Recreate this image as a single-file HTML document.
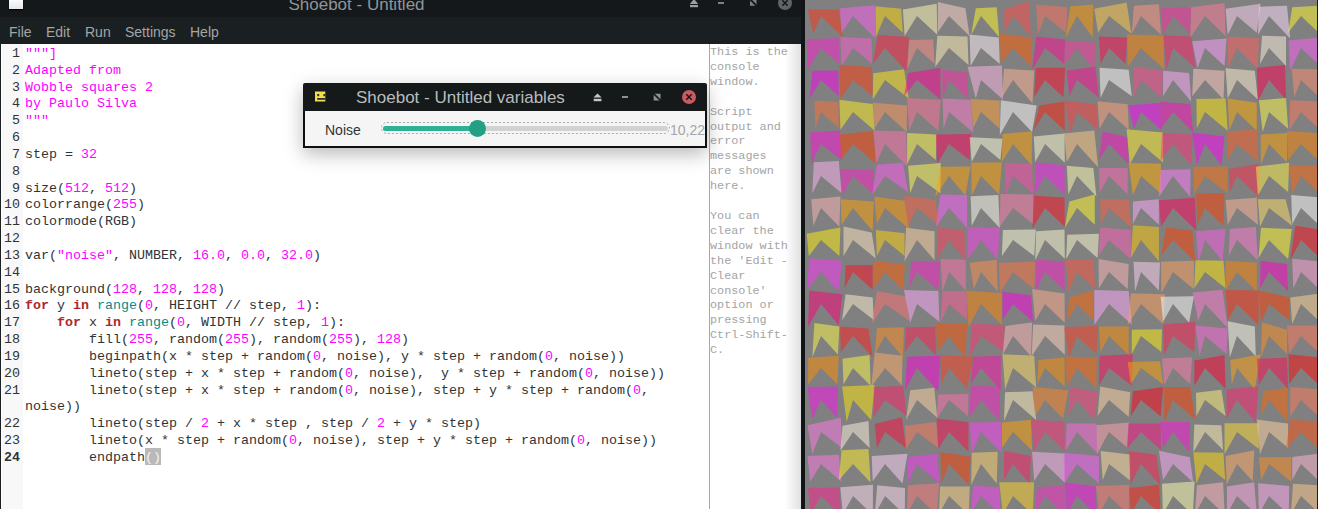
<!DOCTYPE html>
<html><head><meta charset="utf-8">
<style>
*{margin:0;padding:0;box-sizing:border-box}
html,body{width:1318px;height:509px;overflow:hidden;background:#1a1f21;position:relative}
body{font-family:"Liberation Sans",sans-serif}
.abs{position:absolute}
#titlebar{left:0;top:0;width:801px;height:17px;background:#14181a}
#title{left:0;width:713px;top:-5px;text-align:center;color:#8f9598;font-size:17px;white-space:nowrap}
#menubar{left:0;top:17px;width:801px;height:27px;background:#1a2021}
#menubar span{position:absolute;top:7px;color:#a2a5a7;font-size:14px}
#editor{left:1px;top:44px;width:708px;height:465px;background:#fff}
#gutter{left:2px;top:44px;width:21px;height:465px;background:#f8f8f8}
.code{font-family:"Liberation Mono",monospace;font-size:13.33px;line-height:16.83px;white-space:pre;color:#2e3436}
#lnums{left:1px;top:46px;width:22px;text-align:right}
#lnums div{padding-right:3px}
#code{left:25px;top:46px}
.m{color:#ff00ff}.k{color:#b0282c;font-weight:bold}.b{color:#008a8c}
.hl{background:#b9b9b9;color:#f4f4f4;padding:2px 0 0.5px}
#console{left:709px;top:44px;width:92px;height:465px;background:#fff;border-left:1px solid #a8a8a8}
#ctext{left:710px;top:45px;font-family:"Liberation Mono",monospace;font-size:11.8px;line-height:14.9px;color:#a4a4a4;white-space:pre}
#shadow{left:785px;top:44px;width:16px;height:465px;background:linear-gradient(to right,rgba(0,0,0,0),rgba(0,0,0,0.12))}
#strip{left:801px;top:0;width:4px;height:509px;background:#121517}
#canvas{left:805px;top:0;width:513px;height:509px;background:#808080;overflow:hidden}
#vw{left:303px;top:83px;width:404px;height:65px;box-shadow:0 6px 18px rgba(0,0,0,0.28)}
#vtitle{left:0;top:0;width:404px;height:28px;background:#15191a;border-radius:2px 2px 0 0}
#vcontent{left:0;top:28px;width:404px;height:37px;background:#f5f5f5;border:2px solid #0d0f10;border-top:none}
</style></head><body>
<div id="titlebar" class="abs">
  <div class="abs" style="left:9px;top:0;width:14px;height:9px;background:linear-gradient(#fbfafc,#e6e6e6);box-shadow:0 1px 1px #000"></div>
  <svg class="abs" style="left:690px;top:-1px" width="10" height="9" viewBox="0 0 10 9"><path d="M4 0 L8.2 5 L-0.2 5 Z" fill="#9a9ea0"/><rect x="0" y="6" width="8" height="2.2" fill="#9a9ea0"/></svg>
  <div class="abs" style="left:718px;top:2px;width:6px;height:2px;background:#7d8284"></div>
  <svg class="abs" style="left:750px;top:-1px" width="8" height="8" viewBox="0 0 8 8"><path d="M1 0.7 H6.5 V6.2 Z" fill="#7d8284"/><path d="M0 1.5 L5.3 6.8 H0 Z" fill="#7d8284"/><path d="M0.2 0.2 L6.8 6.8" stroke="#161a1c" stroke-width="1.6"/></svg>
  <svg class="abs" style="left:777px;top:-5px" width="16" height="16" viewBox="0 0 16 16"><circle cx="8" cy="8" r="7" fill="#5e6467"/><path d="M5.3 5.3 L10.7 10.7 M10.7 5.3 L5.3 10.7" stroke="#16181a" stroke-width="1.5"/></svg>
  <div id="title" class="abs">Shoebot - Untitled</div>
</div>
<div id="menubar" class="abs">
  <span style="left:9px">File</span>
  <span style="left:46px">Edit</span>
  <span style="left:85px">Run</span>
  <span style="left:125px">Settings</span>
  <span style="left:190px">Help</span>
</div>
<div id="editor" class="abs"></div>
<div id="gutter" class="abs"></div>
<div id="lnums" class="abs code"><div>1</div><div>2</div><div>3</div><div>4</div><div>5</div><div>6</div><div>7</div><div>8</div><div>9</div><div>10</div><div>11</div><div>12</div><div>13</div><div>14</div><div>15</div><div>16</div><div>17</div><div>18</div><div>19</div><div>20</div><div>21</div><div> </div><div>22</div><div>23</div><div style="font-weight:bold">24</div></div>
<div id="code" class="abs code"><span class="m">"""]
Adapted from
Wobble squares 2
by Paulo Silva
"""</span>

step = <span class="m">32</span>

size(<span class="m">512</span>, <span class="m">512</span>)
colorrange(<span class="m">255</span>)
colormode(RGB)

var(<span class="m">"noise"</span>, NUMBER, <span class="m">16.0</span>, <span class="m">0.0</span>, <span class="m">32.0</span>)

background(<span class="m">128</span>, <span class="m">128</span>, <span class="m">128</span>)
<span class="k">for</span> y <span class="k">in</span> <span class="b">range</span>(<span class="m">0</span>, HEIGHT // step, <span class="m">1</span>):
    <span class="k">for</span> x <span class="k">in</span> <span class="b">range</span>(<span class="m">0</span>, WIDTH // step, <span class="m">1</span>):
        fill(<span class="m">255</span>, random(<span class="m">255</span>), random(<span class="m">255</span>), <span class="m">128</span>)
        beginpath(x * step + random(<span class="m">0</span>, noise), y * step + random(<span class="m">0</span>, noise))
        lineto(step + x * step + random(<span class="m">0</span>, noise),  y * step + random(<span class="m">0</span>, noise))
        lineto(step + x * step + random(<span class="m">0</span>, noise), step + y * step + random(<span class="m">0</span>,
noise))
        lineto(step / <span class="m">2</span> + x * step , step / <span class="m">2</span> + y * step)
        lineto(x * step + random(<span class="m">0</span>, noise), step + y * step + random(<span class="m">0</span>, noise))
        endpath<span class="hl">()</span></div>
<div id="console" class="abs"></div>
<div id="ctext" class="abs">This is the
console
window.

Script
output and
error
messages
are shown
here.

You can
clear the
window with
the 'Edit -
Clear
console'
option or
pressing
Ctrl-Shift-
C.</div>
<div id="shadow" class="abs"></div>
<div id="strip" class="abs"></div>
<div id="canvas" class="abs"><svg width="513" height="509" viewBox="0 0 513 509" style="position:absolute;left:0;top:0"><g fill-opacity="0.5"><path d="M2.9 9.4 L33.8 9.4 L37.9 37.3 L16.0 16.0 L8.3 33.8Z" fill="#ff3416"/><path d="M35.0 8.3 L69.8 5.2 L70.4 38.6 L48.0 16.0 L36.5 32.8Z" fill="#ff60f2"/><path d="M70.4 6.2 L96.2 8.8 L97.9 32.8 L80.0 16.0 L70.8 36.9Z" fill="#ffda0a"/><path d="M97.9 9.4 L131.7 3.8 L132.3 34.8 L112.0 16.0 L99.6 35.9Z" fill="#fffcb6"/><path d="M132.9 2.1 L160.4 8.3 L164.6 35.9 L144.0 16.0 L132.9 32.0Z" fill="#ffd4ca"/><path d="M170.8 8.3 L191.7 7.3 L194.2 36.9 L176.0 16.0 L166.2 34.8Z" fill="#fffc2a"/><path d="M199.0 9.4 L224.0 1.0 L226.0 35.9 L208.0 16.0 L199.6 32.3Z" fill="#ff4848"/><path d="M231.2 4.6 L262.2 7.3 L261.2 32.8 L240.0 16.0 L232.9 34.8Z" fill="#ff705c"/><path d="M265.4 6.2 L288.3 4.6 L287.7 37.3 L272.0 16.0 L260.6 38.0Z" fill="#ff9800"/><path d="M289.3 8.8 L321.6 2.5 L326.4 33.8 L304.0 16.0 L293.1 32.8Z" fill="#ffca48"/><path d="M328.9 5.8 L353.9 4.2 L356.0 34.8 L336.0 16.0 L326.8 33.8Z" fill="#ff9884"/><path d="M355.6 7.9 L386.2 7.3 L385.2 33.8 L368.0 16.0 L358.1 34.8Z" fill="#ff2aa2"/><path d="M386.2 7.3 L419.5 3.1 L420.6 35.9 L400.0 16.0 L385.2 38.0Z" fill="#ff7a98"/><path d="M420.6 8.8 L455.6 3.8 L451.8 32.8 L432.0 16.0 L422.7 34.8Z" fill="#ffd4f2"/><path d="M453.9 6.7 L482.0 5.8 L485.2 38.6 L464.0 16.0 L452.9 34.8Z" fill="#ffdefc"/><path d="M487.2 7.3 L515.5 5.5 L515.8 34.7 L496.0 16.0 L483.1 32.8Z" fill="#fffc2a"/><path d="M1.7 39.6 L33.8 37.9 L34.4 64.0 L16.0 48.0 L2.5 70.2Z" fill="#ff20d4"/><path d="M35.4 37.1 L66.7 38.5 L67.1 64.0 L48.0 48.0 L36.5 66.1Z" fill="#ff5cd4"/><path d="M72.9 35.0 L104.2 37.1 L101.7 71.3 L80.0 48.0 L67.7 64.0Z" fill="#ff203e"/><path d="M104.2 40.0 L128.1 39.6 L129.6 64.0 L112.0 48.0 L102.1 69.2Z" fill="#ff8e84"/><path d="M132.3 35.8 L162.5 36.5 L163.5 65.0 L144.0 48.0 L130.2 67.1Z" fill="#fff2b6"/><path d="M164.6 34.4 L193.8 37.5 L194.8 64.0 L176.0 48.0 L165.6 66.1Z" fill="#fff2fc"/><path d="M194.8 33.8 L227.5 37.5 L226.0 66.5 L208.0 48.0 L195.8 64.0Z" fill="#ff5c00"/><path d="M231.2 36.5 L260.2 39.6 L259.1 64.0 L240.0 48.0 L227.1 70.2Z" fill="#ff0c98"/><path d="M260.6 41.2 L290.4 42.7 L289.3 70.2 L272.0 48.0 L259.1 65.0Z" fill="#ff34a2"/><path d="M293.9 36.5 L322.2 37.5 L320.6 64.0 L304.0 48.0 L295.6 64.0Z" fill="#ff0c52"/><path d="M322.2 34.4 L358.5 35.4 L359.1 69.2 L336.0 48.0 L322.7 67.1Z" fill="#ff8402"/><path d="M358.5 35.4 L386.2 36.5 L390.4 67.8 L368.0 48.0 L361.2 70.2Z" fill="#ff2066"/><path d="M387.2 41.2 L421.6 38.5 L419.5 66.1 L400.0 48.0 L392.5 68.2Z" fill="#ffa2ff"/><path d="M422.7 36.5 L453.9 37.9 L452.9 69.2 L432.0 48.0 L422.7 69.2Z" fill="#ff5c5c"/><path d="M457.0 35.8 L481.0 36.5 L481.0 66.1 L464.0 48.0 L455.0 64.0Z" fill="#fff2de"/><path d="M483.5 40.6 L515.5 37.5 L515.8 66.7 L496.0 48.0 L485.2 70.2Z" fill="#ff5cfc"/><path d="M7.3 70.8 L33.3 70.4 L33.8 96.3 L16.0 80.0 L4.6 98.4Z" fill="#ff00f2"/><path d="M34.4 65.0 L67.1 67.1 L67.7 96.0 L48.0 80.0 L35.4 99.4Z" fill="#ff3e0c"/><path d="M68.3 73.3 L99.0 69.2 L103.8 98.4 L80.0 80.0 L67.7 99.4Z" fill="#ffe816"/><path d="M103.1 72.9 L135.4 67.7 L135.4 99.4 L112.0 80.0 L99.0 96.3Z" fill="#ff0098"/><path d="M137.1 69.8 L162.5 72.5 L163.5 99.4 L144.0 80.0 L137.5 98.4Z" fill="#ff2aac"/><path d="M162.5 66.7 L196.9 65.6 L197.9 99.4 L176.0 80.0 L170.8 98.4Z" fill="#ffb6e8"/><path d="M199.0 68.8 L229.2 70.4 L227.5 103.6 L208.0 80.0 L196.9 97.3Z" fill="#ffb698"/><path d="M230.8 67.7 L260.2 67.7 L258.5 97.3 L240.0 80.0 L229.2 96.9Z" fill="#ff0c2a"/><path d="M261.8 70.4 L290.4 66.7 L293.9 97.8 L272.0 80.0 L264.3 96.3Z" fill="#ff0c98"/><path d="M294.5 67.7 L323.7 69.8 L326.8 96.3 L304.0 80.0 L295.6 97.8Z" fill="#ffffff"/><path d="M328.9 66.7 L357.7 70.8 L357.0 97.8 L336.0 80.0 L327.9 98.4Z" fill="#ff488e"/><path d="M358.1 70.8 L384.1 72.9 L386.2 101.5 L368.0 80.0 L358.1 96.3Z" fill="#ffacfc"/><path d="M388.3 68.8 L419.5 70.8 L418.5 99.4 L400.0 80.0 L387.2 96.3Z" fill="#ffcac0"/><path d="M420.6 68.3 L449.8 70.8 L452.9 99.4 L432.0 80.0 L422.7 98.4Z" fill="#fff2d4"/><path d="M451.8 67.7 L480.0 65.0 L481.0 99.4 L464.0 80.0 L452.9 101.1Z" fill="#ff0052"/><path d="M486.8 68.8 L515.5 69.5 L515.8 98.7 L496.0 80.0 L489.3 97.3Z" fill="#ff8e70"/><path d="M9.4 100.6 L33.3 101.8 L33.8 128.0 L16.0 112.0 L10.4 128.0Z" fill="#ff7034"/><path d="M34.4 99.8 L67.7 103.9 L69.8 130.8 L48.0 112.0 L35.4 129.8Z" fill="#fff220"/><path d="M67.7 102.7 L102.1 105.4 L101.7 131.9 L80.0 112.0 L69.8 128.0Z" fill="#ff985c"/><path d="M102.1 98.1 L135.8 99.8 L133.3 130.8 L112.0 112.0 L104.2 130.8Z" fill="#ff7098"/><path d="M137.5 98.5 L165.6 99.8 L168.3 132.5 L144.0 112.0 L138.5 128.8Z" fill="#ff7aca"/><path d="M165.6 99.1 L194.8 100.6 L194.8 128.8 L176.0 112.0 L168.3 128.0Z" fill="#ffa234"/><path d="M195.8 100.2 L231.7 105.4 L227.1 131.9 L208.0 112.0 L194.8 135.0Z" fill="#ffffff"/><path d="M234.4 105.4 L259.5 101.5 L259.8 130.7 L240.0 112.0 L228.1 130.8Z" fill="#ff200c"/><path d="M259.8 100.6 L291.4 104.3 L293.5 130.4 L272.0 112.0 L265.4 132.9Z" fill="#ff3e3e"/><path d="M292.5 101.2 L322.7 104.3 L323.7 129.8 L304.0 112.0 L294.5 128.8Z" fill="#ffa27a"/><path d="M323.1 105.4 L355.6 102.7 L356.0 129.8 L336.0 112.0 L328.9 128.8Z" fill="#ff00ff"/><path d="M355.6 101.8 L385.2 103.9 L388.3 132.5 L368.0 112.0 L356.0 128.8Z" fill="#ff0cc0"/><path d="M391.4 99.1 L420.6 98.5 L422.7 130.8 L400.0 112.0 L391.8 128.3Z" fill="#ffe80a"/><path d="M422.7 98.5 L451.8 102.7 L451.8 130.8 L432.0 112.0 L424.3 130.4Z" fill="#ffac00"/><path d="M453.9 100.2 L481.0 98.1 L483.1 128.8 L464.0 112.0 L457.7 131.9Z" fill="#fffc48"/><path d="M485.2 100.2 L515.5 101.5 L515.8 130.7 L496.0 112.0 L484.1 130.8Z" fill="#ff7a5c"/><path d="M5.2 132.5 L35.0 130.4 L36.5 160.0 L16.0 144.0 L6.2 164.2Z" fill="#ff10de"/><path d="M35.0 134.5 L67.7 131.0 L71.9 164.6 L48.0 144.0 L35.8 160.0Z" fill="#ff3e00"/><path d="M68.8 130.4 L101.0 131.4 L102.1 166.2 L80.0 144.0 L70.8 164.2Z" fill="#ff70ac"/><path d="M102.1 133.1 L131.7 134.5 L130.8 160.0 L112.0 144.0 L102.1 164.2Z" fill="#fffc48"/><path d="M130.8 134.5 L166.2 133.9 L164.6 160.0 L144.0 144.0 L132.3 163.8Z" fill="#ff005c"/><path d="M164.6 137.2 L197.5 138.7 L195.4 160.0 L176.0 144.0 L166.7 162.1Z" fill="#ffffde"/><path d="M197.5 133.9 L227.1 131.4 L226.7 165.2 L208.0 144.0 L196.9 162.1Z" fill="#ffa200"/><path d="M228.8 136.6 L259.5 133.5 L259.8 162.7 L240.0 144.0 L230.2 162.1Z" fill="#ffffd4"/><path d="M259.1 133.5 L289.3 130.4 L293.1 167.3 L272.0 144.0 L261.8 162.1Z" fill="#ffca84"/><path d="M297.7 131.4 L322.7 137.2 L323.7 164.2 L304.0 144.0 L293.9 160.0Z" fill="#ff10ca"/><path d="M321.6 129.3 L358.1 132.5 L358.1 162.5 L336.0 144.0 L324.8 164.2Z" fill="#fff22a"/><path d="M357.0 133.1 L387.7 134.5 L386.2 165.2 L368.0 144.0 L355.6 161.0Z" fill="#ff307a"/><path d="M387.2 132.5 L419.5 136.6 L416.4 165.2 L400.0 144.0 L391.8 165.2Z" fill="#ff00fc"/><path d="M421.6 131.4 L451.8 129.3 L453.5 162.1 L432.0 144.0 L422.7 160.0Z" fill="#ff5c20"/><path d="M455.6 134.5 L482.0 133.1 L482.0 162.5 L464.0 144.0 L456.0 164.2Z" fill="#ffa200"/><path d="M482.0 131.0 L515.5 133.5 L515.8 162.7 L496.0 144.0 L483.1 160.0Z" fill="#ff8400"/><path d="M8.8 162.2 L33.8 161.0 L36.5 192.9 L16.0 176.0 L7.3 193.3Z" fill="#ffb6f2"/><path d="M35.0 168.9 L68.8 170.0 L67.7 193.8 L48.0 176.0 L37.5 195.0Z" fill="#ff20ca"/><path d="M71.9 164.8 L97.9 162.7 L103.1 192.0 L80.0 176.0 L67.1 195.0Z" fill="#ff5cf2"/><path d="M103.1 165.8 L135.8 163.1 L135.4 193.3 L112.0 176.0 L105.2 193.3Z" fill="#fffc52"/><path d="M135.4 166.8 L165.6 166.4 L160.4 195.4 L144.0 176.0 L130.2 197.1Z" fill="#ffa200"/><path d="M166.2 162.7 L196.9 162.2 L194.2 194.4 L176.0 176.0 L166.7 195.4Z" fill="#ffa200"/><path d="M199.6 163.1 L227.1 163.7 L228.1 193.8 L208.0 176.0 L201.0 194.4Z" fill="#ff48ac"/><path d="M231.2 162.2 L259.5 165.5 L259.8 194.7 L240.0 176.0 L229.2 195.4Z" fill="#ff20f2"/><path d="M261.8 165.8 L288.3 167.9 L291.4 196.5 L272.0 176.0 L263.3 194.4Z" fill="#ffffb6"/><path d="M293.9 167.9 L322.7 167.9 L322.7 194.4 L304.0 176.0 L294.5 193.3Z" fill="#ff66b6"/><path d="M323.7 163.1 L356.0 163.7 L355.6 193.3 L336.0 176.0 L327.9 195.4Z" fill="#ffac00"/><path d="M355.6 170.0 L385.6 169.3 L385.2 197.1 L368.0 176.0 L353.9 197.1Z" fill="#ff7aff"/><path d="M388.3 166.8 L422.7 166.4 L422.7 193.3 L400.0 176.0 L389.3 193.8Z" fill="#ff700c"/><path d="M423.7 168.9 L453.5 163.7 L453.9 197.1 L432.0 176.0 L424.8 192.0Z" fill="#ff2a48"/><path d="M450.8 166.8 L484.1 162.7 L483.1 192.0 L464.0 176.0 L452.9 195.4Z" fill="#fff248"/><path d="M483.5 165.8 L515.5 165.5 L515.8 194.7 L496.0 176.0 L487.7 193.3Z" fill="#ff660c"/><path d="M6.2 199.3 L35.4 196.6 L34.4 226.8 L16.0 208.0 L8.3 225.8Z" fill="#ffb6b6"/><path d="M35.8 199.3 L68.8 201.4 L67.7 231.0 L48.0 208.0 L36.5 224.8Z" fill="#ffa200"/><path d="M69.2 196.6 L99.6 200.8 L104.2 228.9 L80.0 208.0 L71.9 224.0Z" fill="#ff9800"/><path d="M99.0 195.8 L130.2 199.9 L134.4 225.8 L112.0 208.0 L102.5 227.2Z" fill="#ff5c3e"/><path d="M135.4 194.5 L162.1 195.1 L162.1 227.9 L144.0 208.0 L130.8 226.8Z" fill="#ff5cff"/><path d="M165.6 196.2 L193.3 195.1 L194.8 227.9 L176.0 208.0 L166.7 225.8Z" fill="#fffff2"/><path d="M195.4 194.1 L228.1 194.5 L228.1 224.0 L208.0 208.0 L194.8 226.8Z" fill="#ff7aac"/><path d="M229.2 195.8 L259.5 197.5 L259.8 226.7 L240.0 208.0 L227.5 228.5Z" fill="#ff0c20"/><path d="M264.3 201.4 L289.8 194.5 L289.8 224.8 L272.0 208.0 L259.8 227.9Z" fill="#fffc2a"/><path d="M295.2 199.3 L323.7 199.3 L326.4 227.9 L304.0 208.0 L296.0 224.8Z" fill="#ff5c3e"/><path d="M327.9 201.4 L353.9 199.3 L353.9 224.8 L336.0 208.0 L327.9 224.0Z" fill="#ffacfc"/><path d="M353.9 200.3 L389.8 197.8 L391.4 230.6 L368.0 208.0 L356.0 226.8Z" fill="#ff005c"/><path d="M391.0 193.7 L419.5 193.0 L418.5 225.8 L400.0 208.0 L392.5 224.8Z" fill="#ff3e00"/><path d="M420.6 199.9 L451.8 197.8 L452.9 224.8 L432.0 208.0 L422.7 224.8Z" fill="#ffb698"/><path d="M452.9 199.3 L480.6 199.3 L487.2 225.8 L464.0 208.0 L455.0 226.8Z" fill="#ffde66"/><path d="M486.2 195.1 L515.5 197.5 L515.8 226.7 L496.0 208.0 L487.2 224.0Z" fill="#ffffff"/><path d="M1.7 233.7 L35.4 227.4 L34.4 256.0 L16.0 240.0 L3.8 256.0Z" fill="#fff20a"/><path d="M38.5 226.4 L66.7 232.6 L70.8 258.5 L48.0 240.0 L38.5 256.0Z" fill="#ffe8c0"/><path d="M70.8 229.9 L99.6 233.2 L99.6 256.0 L80.0 240.0 L71.9 256.0Z" fill="#ffd40a"/><path d="M101.0 227.8 L129.6 231.2 L129.6 260.2 L112.0 240.0 L99.6 261.2Z" fill="#ffd4a2"/><path d="M133.3 227.8 L159.4 229.9 L160.4 260.2 L144.0 240.0 L131.7 259.8Z" fill="#ff3e5c"/><path d="M162.5 227.0 L194.8 227.8 L192.7 259.8 L176.0 240.0 L162.5 259.8Z" fill="#ff3ef2"/><path d="M197.9 229.9 L230.8 229.5 L229.2 256.0 L208.0 240.0 L196.9 256.0Z" fill="#ffffde"/><path d="M231.2 231.2 L259.5 229.5 L259.8 258.7 L240.0 240.0 L230.2 260.2Z" fill="#ffffd4"/><path d="M262.2 234.7 L293.9 233.7 L292.5 258.1 L272.0 240.0 L261.2 259.1Z" fill="#ffffd4"/><path d="M295.2 227.4 L325.8 229.9 L325.8 259.1 L304.0 240.0 L293.5 256.0Z" fill="#ff5cb6"/><path d="M327.9 225.3 L353.9 227.0 L353.9 261.2 L336.0 240.0 L325.8 258.1Z" fill="#ffca0a"/><path d="M361.2 227.4 L387.2 230.5 L390.4 261.8 L368.0 240.0 L356.0 256.0Z" fill="#ff3e00"/><path d="M391.0 231.2 L420.6 229.1 L417.5 261.2 L400.0 240.0 L393.5 262.2Z" fill="#ff5ce8"/><path d="M424.8 229.1 L450.8 227.0 L452.9 260.2 L432.0 240.0 L423.7 256.0Z" fill="#ff7ad4"/><path d="M456.0 227.8 L486.8 229.1 L483.1 259.1 L464.0 240.0 L453.5 258.1Z" fill="#fffc2a"/><path d="M490.4 225.8 L515.5 229.5 L515.8 258.7 L496.0 240.0 L485.2 260.2Z" fill="#ff0c20"/><path d="M4.2 258.2 L37.1 260.8 L33.3 291.4 L16.0 272.0 L2.1 289.8Z" fill="#ff34fc"/><path d="M40.6 265.3 L67.7 264.9 L67.7 289.8 L48.0 272.0 L39.6 288.0Z" fill="#ff0c20"/><path d="M68.8 260.8 L100.0 264.5 L97.9 289.8 L80.0 272.0 L68.8 288.3Z" fill="#ff5c00"/><path d="M106.2 260.8 L135.4 261.8 L133.3 290.4 L112.0 272.0 L104.2 288.3Z" fill="#ff20ca"/><path d="M135.4 259.1 L160.8 259.7 L160.8 290.4 L144.0 272.0 L137.5 291.4Z" fill="#ff70ac"/><path d="M164.6 262.8 L191.7 259.7 L192.7 291.4 L176.0 272.0 L168.8 289.3Z" fill="#ff8e48"/><path d="M193.8 262.8 L230.2 261.8 L229.2 289.3 L208.0 272.0 L194.8 293.5Z" fill="#ff703e"/><path d="M231.2 259.7 L259.5 261.5 L259.8 290.7 L240.0 272.0 L230.8 291.4Z" fill="#ff20ca"/><path d="M260.6 259.7 L288.3 259.7 L290.4 289.3 L272.0 272.0 L263.3 292.5Z" fill="#ff523e"/><path d="M293.5 259.1 L323.7 263.9 L322.7 289.3 L304.0 272.0 L293.9 288.3Z" fill="#ffb6b6"/><path d="M328.5 261.8 L355.0 262.4 L353.9 290.4 L336.0 272.0 L330.0 291.4Z" fill="#ffd4f2"/><path d="M356.0 261.8 L388.9 260.8 L388.9 289.3 L368.0 272.0 L356.4 293.1Z" fill="#ffa25c"/><path d="M390.4 260.3 L418.5 260.8 L420.6 288.3 L400.0 272.0 L389.3 288.3Z" fill="#ffe80a"/><path d="M420.6 260.8 L451.8 262.8 L451.8 291.4 L432.0 272.0 L420.6 290.4Z" fill="#ff8400"/><path d="M455.6 260.8 L482.0 263.9 L483.1 291.4 L464.0 272.0 L455.0 288.3Z" fill="#ff00ca"/><path d="M487.2 258.7 L515.5 261.5 L515.8 290.7 L496.0 272.0 L488.3 288.3Z" fill="#ffa2d4"/><path d="M4.2 290.5 L37.5 294.2 L33.8 325.3 L16.0 304.0 L3.1 327.0Z" fill="#ff007a"/><path d="M40.6 294.2 L67.7 297.4 L68.8 320.0 L48.0 304.0 L37.1 320.3Z" fill="#fff2d4"/><path d="M71.9 291.1 L101.0 296.3 L104.2 320.8 L80.0 304.0 L66.7 323.9Z" fill="#ff7070"/><path d="M99.0 290.1 L133.3 291.1 L134.4 321.8 L112.0 304.0 L105.2 322.8Z" fill="#ffacfc"/><path d="M137.5 291.1 L161.5 291.1 L162.1 320.0 L144.0 304.0 L135.4 323.2Z" fill="#ff5c98"/><path d="M161.5 290.5 L196.9 293.2 L196.9 324.9 L176.0 304.0 L163.5 327.0Z" fill="#ff8400"/><path d="M197.5 291.8 L226.0 295.3 L228.1 321.8 L208.0 304.0 L197.5 320.0Z" fill="#ff00e8"/><path d="M227.1 289.0 L259.5 293.5 L259.8 322.7 L240.0 304.0 L230.2 320.8Z" fill="#ffac8e"/><path d="M264.3 297.4 L288.9 290.1 L288.3 320.8 L272.0 304.0 L262.2 320.8Z" fill="#ff6600"/><path d="M289.3 290.1 L323.7 291.1 L326.8 324.5 L304.0 304.0 L289.3 324.9Z" fill="#ffacff"/><path d="M325.8 293.2 L359.8 294.2 L358.1 323.9 L336.0 304.0 L322.7 325.3Z" fill="#ffa25c"/><path d="M355.6 296.8 L388.9 296.3 L384.1 322.8 L368.0 304.0 L358.1 321.8Z" fill="#ffffff"/><path d="M387.7 292.6 L417.5 289.7 L422.7 328.0 L400.0 304.0 L393.1 320.8Z" fill="#ff7ad4"/><path d="M420.6 289.7 L453.9 290.5 L453.5 324.9 L432.0 304.0 L422.7 320.8Z" fill="#ff3010"/><path d="M453.9 290.5 L484.8 297.4 L484.8 320.8 L464.0 304.0 L456.0 322.8Z" fill="#ff3e00"/><path d="M485.2 297.4 L515.5 293.5 L515.8 322.7 L496.0 304.0 L487.2 323.9Z" fill="#ffd498"/><path d="M9.4 323.0 L34.4 326.5 L32.9 354.5 L16.0 336.0 L7.3 357.2Z" fill="#fffc48"/><path d="M35.0 326.5 L63.5 328.6 L67.7 357.2 L48.0 336.0 L35.8 352.0Z" fill="#ff2020"/><path d="M71.9 328.0 L99.0 327.2 L97.9 357.2 L80.0 336.0 L69.8 354.1Z" fill="#ff8e20"/><path d="M101.0 327.6 L130.2 326.5 L131.2 355.8 L112.0 336.0 L99.6 352.0Z" fill="#ff2052"/><path d="M130.8 323.0 L162.1 323.4 L160.4 358.2 L144.0 336.0 L132.3 352.0Z" fill="#ff5200"/><path d="M166.7 323.8 L199.6 325.1 L199.0 352.0 L176.0 336.0 L164.6 357.2Z" fill="#ff3470"/><path d="M200.4 325.9 L227.1 322.4 L226.0 356.2 L208.0 336.0 L197.5 355.1Z" fill="#ffb6b6"/><path d="M228.1 324.5 L259.5 325.5 L259.8 354.7 L240.0 336.0 L226.7 356.2Z" fill="#ffd4c0"/><path d="M259.1 327.6 L293.1 325.5 L291.4 354.1 L272.0 336.0 L264.3 357.2Z" fill="#ff3e20"/><path d="M293.9 326.5 L323.7 326.5 L323.7 355.1 L304.0 336.0 L295.6 352.0Z" fill="#ff8e00"/><path d="M326.8 329.7 L357.0 329.2 L356.4 352.0 L336.0 336.0 L326.8 354.1Z" fill="#fff20a"/><path d="M358.1 324.5 L390.4 321.8 L389.3 352.0 L368.0 336.0 L359.1 355.1Z" fill="#ff2052"/><path d="M390.4 325.5 L422.7 328.6 L421.6 354.1 L400.0 336.0 L394.5 356.2Z" fill="#ff66de"/><path d="M422.7 321.3 L449.8 326.5 L450.8 356.2 L432.0 336.0 L424.8 357.2Z" fill="#fffff2"/><path d="M457.0 322.4 L482.0 329.7 L482.0 354.1 L464.0 336.0 L456.0 357.2Z" fill="#ff8e20"/><path d="M482.0 325.5 L515.5 325.5 L515.8 354.7 L496.0 336.0 L484.1 354.1Z" fill="#ff7a5c"/><path d="M3.1 357.8 L33.8 355.7 L32.3 384.3 L16.0 368.0 L3.1 384.3Z" fill="#ff8e00"/><path d="M37.5 358.8 L64.6 355.1 L65.6 385.8 L48.0 368.0 L38.5 384.3Z" fill="#fffc48"/><path d="M69.8 352.6 L97.5 355.7 L96.9 385.3 L80.0 368.0 L66.2 387.0Z" fill="#ffac66"/><path d="M102.1 356.8 L135.4 355.7 L133.3 391.6 L112.0 368.0 L100.0 390.5Z" fill="#ff00de"/><path d="M135.4 355.1 L168.3 356.8 L162.1 389.1 L144.0 368.0 L136.5 384.3Z" fill="#ff3e20"/><path d="M168.3 356.8 L195.8 355.7 L195.8 390.5 L176.0 368.0 L165.6 384.3Z" fill="#ff10ac"/><path d="M197.5 354.2 L229.2 355.7 L231.2 387.4 L208.0 368.0 L200.0 389.5Z" fill="#ffde66"/><path d="M233.3 359.9 L259.5 357.5 L259.8 386.7 L240.0 368.0 L232.3 384.0Z" fill="#ff8e00"/><path d="M260.2 356.3 L291.8 357.8 L291.4 388.5 L272.0 368.0 L262.2 387.4Z" fill="#ff6600"/><path d="M294.5 355.7 L327.9 354.2 L326.8 385.8 L304.0 368.0 L293.9 385.8Z" fill="#ff0c5c"/><path d="M322.7 362.0 L355.0 361.3 L358.1 384.3 L336.0 368.0 L325.8 384.3Z" fill="#ffa200"/><path d="M357.0 358.4 L387.2 357.2 L385.2 384.3 L368.0 368.0 L359.1 385.3Z" fill="#ff7aac"/><path d="M389.3 360.5 L419.5 355.1 L420.6 389.1 L400.0 368.0 L389.3 385.8Z" fill="#ff0034"/><path d="M425.2 359.9 L455.6 354.2 L449.8 389.5 L432.0 368.0 L426.8 384.3Z" fill="#ffa20c"/><path d="M451.8 358.8 L482.0 357.8 L483.1 389.1 L464.0 368.0 L453.9 385.3Z" fill="#ff0c52"/><path d="M483.5 354.2 L515.5 357.5 L515.8 386.7 L496.0 368.0 L484.1 384.0Z" fill="#ff0c0c"/><path d="M2.5 387.1 L32.9 386.5 L32.3 417.8 L16.0 400.0 L7.3 419.2Z" fill="#ff10f2"/><path d="M37.1 386.5 L69.8 385.0 L66.2 419.9 L48.0 400.0 L41.7 422.0Z" fill="#ffe80a"/><path d="M68.8 387.1 L98.3 386.1 L101.7 416.0 L80.0 400.0 L68.8 416.8Z" fill="#ff2066"/><path d="M105.2 390.2 L129.2 387.8 L132.3 417.8 L112.0 400.0 L101.0 419.9Z" fill="#ffd4a2"/><path d="M133.3 394.4 L163.5 394.0 L162.9 416.0 L144.0 400.0 L131.7 418.8Z" fill="#ff70ac"/><path d="M165.6 386.1 L194.8 386.5 L194.8 421.3 L176.0 400.0 L164.6 417.8Z" fill="#ff20ca"/><path d="M200.0 392.3 L227.5 391.3 L231.2 419.9 L208.0 400.0 L199.0 420.9Z" fill="#fff2c0"/><path d="M227.5 387.1 L263.3 390.2 L258.1 418.8 L240.0 400.0 L230.2 416.0Z" fill="#ff8420"/><path d="M265.4 387.1 L293.1 392.3 L289.3 419.2 L272.0 400.0 L263.3 416.0Z" fill="#ff3e7a"/><path d="M295.2 386.5 L325.2 392.3 L323.7 416.8 L304.0 400.0 L292.5 416.0Z" fill="#ffd4a2"/><path d="M327.9 391.3 L358.1 387.1 L355.6 416.3 L336.0 400.0 L325.8 416.3Z" fill="#ff0016"/><path d="M359.1 387.1 L385.2 387.1 L390.4 419.9 L368.0 400.0 L359.1 422.6Z" fill="#ff3e00"/><path d="M391.0 392.8 L416.4 389.8 L420.6 416.0 L400.0 400.0 L391.4 416.0Z" fill="#fff27a"/><path d="M421.6 389.2 L453.5 386.5 L450.8 422.6 L432.0 400.0 L421.6 418.8Z" fill="#ff2070"/><path d="M458.1 391.3 L482.7 387.8 L482.0 421.3 L464.0 400.0 L456.0 416.0Z" fill="#ff6600"/><path d="M485.2 387.1 L515.5 389.5 L515.8 418.7 L496.0 400.0 L485.2 416.8Z" fill="#ff7a5c"/><path d="M2.5 425.2 L35.8 417.8 L37.1 448.0 L16.0 432.0 L7.3 454.2Z" fill="#ff7ae8"/><path d="M37.5 425.7 L63.5 421.1 L64.6 448.0 L48.0 432.0 L35.4 451.1Z" fill="#fff2de"/><path d="M69.8 424.0 L96.9 417.3 L101.0 448.0 L80.0 432.0 L71.9 448.0Z" fill="#ff0c3e"/><path d="M100.0 425.7 L131.2 421.9 L133.3 448.0 L112.0 432.0 L101.0 449.0Z" fill="#ff7a5c"/><path d="M131.7 418.4 L163.5 421.9 L163.5 451.8 L144.0 432.0 L133.3 449.0Z" fill="#ff0c52"/><path d="M164.6 422.5 L195.8 421.9 L196.9 453.2 L176.0 432.0 L166.7 454.2Z" fill="#ff3efc"/><path d="M196.9 422.5 L226.0 419.8 L227.1 450.5 L208.0 432.0 L196.9 448.0Z" fill="#ffa200"/><path d="M226.0 419.8 L259.5 421.5 L259.8 450.7 L240.0 432.0 L228.8 451.8Z" fill="#ff307a"/><path d="M261.8 423.6 L291.4 423.6 L293.1 454.2 L272.0 432.0 L260.6 451.1Z" fill="#ff66de"/><path d="M291.4 425.2 L323.7 422.5 L322.7 448.0 L304.0 432.0 L292.5 453.2Z" fill="#ffa2ac"/><path d="M323.7 423.6 L355.6 423.6 L356.0 450.1 L336.0 432.0 L321.6 449.0Z" fill="#ff1084"/><path d="M355.0 421.9 L384.8 421.9 L384.1 451.8 L368.0 432.0 L358.1 448.0Z" fill="#ff10de"/><path d="M389.3 424.6 L416.4 425.2 L418.1 450.1 L400.0 432.0 L388.3 452.2Z" fill="#fff2b6"/><path d="M419.5 423.2 L453.5 423.2 L453.9 449.0 L432.0 432.0 L419.5 454.2Z" fill="#ffde34"/><path d="M451.8 419.4 L483.1 423.6 L483.1 448.0 L464.0 432.0 L455.0 454.2Z" fill="#ffd4a2"/><path d="M484.8 419.8 L515.5 421.5 L515.8 450.7 L496.0 432.0 L481.0 449.0Z" fill="#ff5210"/><path d="M2.5 455.9 L33.8 454.8 L36.5 481.8 L16.0 464.0 L5.2 481.8Z" fill="#ff7ae8"/><path d="M36.5 450.2 L63.5 449.0 L65.6 482.4 L48.0 464.0 L33.8 480.3Z" fill="#fff22a"/><path d="M66.7 455.9 L102.5 453.8 L97.5 483.4 L80.0 464.0 L67.7 481.3Z" fill="#ffd4fc"/><path d="M103.1 456.9 L132.3 453.8 L134.4 483.4 L112.0 464.0 L102.1 485.1Z" fill="#ff34fc"/><path d="M135.4 452.3 L165.6 456.5 L163.5 485.1 L144.0 464.0 L136.5 483.4Z" fill="#ff3e00"/><path d="M166.7 452.8 L192.7 451.7 L191.7 483.4 L176.0 464.0 L166.2 485.1Z" fill="#ffd470"/><path d="M199.0 451.1 L226.0 455.9 L224.6 483.8 L208.0 464.0 L199.0 480.0Z" fill="#ff2066"/><path d="M227.1 451.7 L259.5 453.5 L259.8 482.7 L240.0 464.0 L229.2 480.9Z" fill="#ffb6f2"/><path d="M258.5 452.8 L293.9 455.9 L293.9 483.4 L272.0 464.0 L259.1 483.4Z" fill="#ff5cff"/><path d="M295.6 451.1 L325.2 454.4 L324.8 480.3 L304.0 464.0 L297.7 480.3Z" fill="#ffdea2"/><path d="M323.7 451.1 L351.4 454.8 L355.6 485.5 L336.0 464.0 L325.8 484.5Z" fill="#ff2052"/><path d="M353.9 450.7 L384.8 457.3 L388.3 482.4 L368.0 464.0 L358.1 480.0Z" fill="#ffacfc"/><path d="M388.3 452.3 L418.5 452.8 L420.2 480.0 L400.0 464.0 L391.4 483.4Z" fill="#ffda0a"/><path d="M420.6 455.9 L449.3 450.2 L447.7 481.3 L432.0 464.0 L421.6 484.5Z" fill="#ffac66"/><path d="M453.9 457.3 L486.2 456.9 L486.2 481.8 L464.0 464.0 L456.0 480.3Z" fill="#ff8e20"/><path d="M487.2 456.9 L515.5 453.5 L515.8 482.7 L496.0 464.0 L487.2 480.0Z" fill="#ffb6d4"/><path d="M2.9 488.0 L34.6 487.6 L35.8 514.7 L16.0 496.0 L5.9 514.2Z" fill="#ff208e"/><path d="M35.3 487.2 L68.0 484.7 L67.8 514.7 L48.0 496.0 L37.9 514.2Z" fill="#ffdef2"/><path d="M72.2 485.3 L100.0 488.0 L99.8 514.7 L80.0 496.0 L69.9 514.2Z" fill="#ffdef2"/><path d="M102.9 485.3 L134.0 483.3 L131.8 514.7 L112.0 496.0 L101.9 514.2Z" fill="#ff7a7a"/><path d="M135.0 486.6 L164.7 486.6 L163.8 514.7 L144.0 496.0 L133.9 514.2Z" fill="#ffd484"/><path d="M168.0 485.7 L194.2 487.2 L195.8 514.7 L176.0 496.0 L165.9 514.2Z" fill="#ff3efc"/><path d="M194.2 482.2 L229.1 482.2 L227.8 514.7 L208.0 496.0 L197.9 514.2Z" fill="#ffd42a"/><path d="M232.0 487.2 L259.5 485.5 L259.8 514.7 L240.0 496.0 L229.9 514.2Z" fill="#ff2aca"/><path d="M259.9 482.2 L290.6 486.6 L291.8 514.7 L272.0 496.0 L261.9 514.2Z" fill="#ff10e8"/><path d="M291.0 486.0 L324.0 484.7 L323.8 514.7 L304.0 496.0 L293.9 514.2Z" fill="#ff7a70"/><path d="M324.3 488.0 L354.1 484.7 L355.8 514.7 L336.0 496.0 L325.9 514.2Z" fill="#ff2010"/><path d="M357.0 483.7 L389.6 481.4 L387.8 514.7 L368.0 496.0 L357.9 514.2Z" fill="#ffffb6"/><path d="M391.9 485.3 L418.1 482.2 L419.8 514.7 L400.0 496.0 L389.9 514.2Z" fill="#ffb6c0"/><path d="M422.0 486.6 L449.2 482.2 L451.8 514.7 L432.0 496.0 L421.9 514.2Z" fill="#fface8"/><path d="M453.1 483.3 L484.2 486.0 L483.8 514.7 L464.0 496.0 L453.9 514.2Z" fill="#ffacf2"/><path d="M488.0 483.7 L515.5 485.5 L515.8 514.7 L496.0 496.0 L485.9 514.2Z" fill="#ffca8e"/></g></svg></div>
<div class="abs" style="left:1317px;top:0;width:1px;height:509px;background:#1a1c1d"></div>
<div id="vw" class="abs">
  <div id="vtitle" class="abs">
    <svg class="abs" style="left:12px;top:8px" width="12" height="12" viewBox="0 0 12 12"><rect x="0" y="0.5" width="10.3" height="10" fill="#f3df45"/><rect x="2.2" y="3" width="2" height="2.2" fill="#2a2f45"/><rect x="8.3" y="3" width="2" height="2.2" fill="#2a2f45"/><rect x="2.2" y="7" width="8.1" height="1.8" fill="#2a2f45"/></svg>
    <div class="abs" style="left:53px;top:5px;color:#b9bdbf;font-size:17px;white-space:nowrap">Shoebot - Untitled variables</div>
    <svg class="abs" style="left:290px;top:10px" width="10" height="9" viewBox="0 0 10 9"><path d="M4.5 0.6 L8.6 4.6 L0.4 4.6 Z" fill="#c4c8c9"/><rect x="0.7" y="5.8" width="7.7" height="2.4" fill="#c4c8c9"/></svg>
    <div class="abs" style="left:319px;top:13px;width:6px;height:2px;background:#8e9294"></div>
    <svg class="abs" style="left:350px;top:10px" width="8" height="8" viewBox="0 0 8 8"><path d="M1 0.7 H7.5 V7.2 Z" fill="#8e9294"/><path d="M0.7 0.9 L7.3 7.5 H0.7 Z" fill="#8e9294"/><path d="M0.2 0.2 L7.8 7.8" stroke="#161a1c" stroke-width="1.6"/></svg>
    <svg class="abs" style="left:378px;top:7px" width="16" height="16" viewBox="0 0 16 16"><circle cx="8" cy="7" r="7" fill="#cc5860"/><path d="M5.3 4.3 L10.7 9.7 M10.7 4.3 L5.3 9.7" stroke="#16181a" stroke-width="1.5"/></svg>
  </div>
  <div id="vcontent" class="abs">
    <div class="abs" style="left:20px;top:11px;color:#2e3436;font-size:14px">Noise</div>
    <svg class="abs" style="left:76px;top:11px" width="290" height="13" viewBox="0 0 290 13"><rect x="0.5" y="0.5" width="288" height="11" rx="5.5" fill="none" stroke="#a9a9a9" stroke-width="1" stroke-dasharray="2 2"/></svg>
    <div class="abs" style="left:78px;top:15px;width:285px;height:5px;background:#d2d2d2;border-radius:3px"></div>
    <div class="abs" style="left:78px;top:15px;width:98px;height:5px;background:#2eb094;border-radius:3px 0 0 3px"></div>
    <div class="abs" style="left:164px;top:9px;width:17px;height:17px;background:#239f86;border-radius:50%"></div>
    <div class="abs" style="left:365px;top:11px;color:#a3a5a6;font-size:14px">10,22</div>
  </div>
</div>
</body></html>
